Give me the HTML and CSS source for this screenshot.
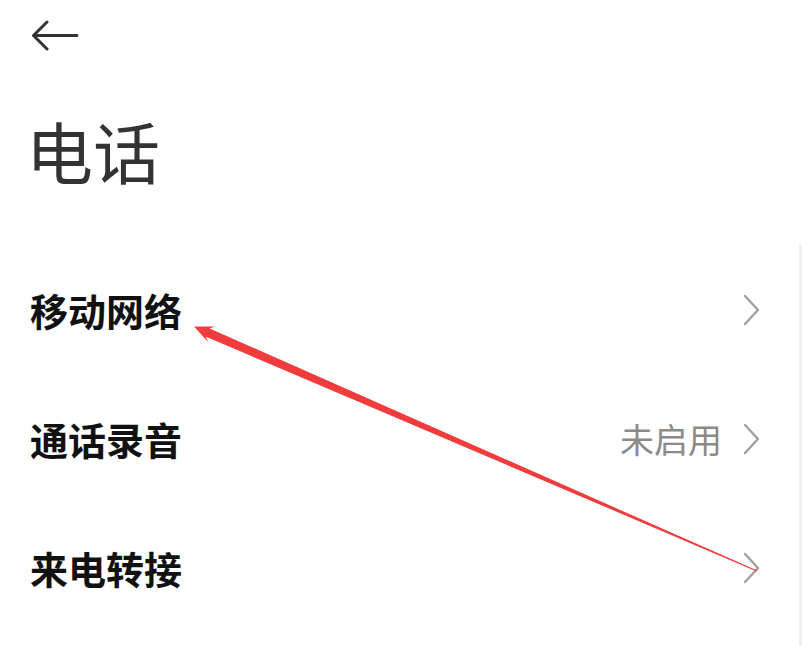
FILE: index.html
```html
<!DOCTYPE html>
<html lang="zh-CN">
<head>
<meta charset="utf-8">
<title>电话</title>
<link rel="stylesheet" href="styles.css">
</head>
<body>
<div class="page">
  <header class="topbar">
    <svg class="back" width="48" height="34" viewBox="0 0 48 34">
      <path d="M15 2 L1.5 15.5 L15 29 M1.5 15.5 H45" fill="none" stroke="#333" stroke-width="3" stroke-linecap="round" stroke-linejoin="round"/>
    </svg>
  </header>
  <h1 class="title">电话</h1>
  <ul class="list">
    <li class="row">
      <span class="label">移动网络</span>
      <span class="right">
        <svg class="chev" width="20" height="34" viewBox="0 0 20 34"><path d="M3 3 L16 17 L3 31" fill="none" stroke="#a0a0a0" stroke-width="2.4" stroke-linecap="round" stroke-linejoin="round"/></svg>
      </span>
    </li>
    <li class="row">
      <span class="label">通话录音</span>
      <span class="right">
        <span class="value">未启用</span>
        <svg class="chev" width="20" height="34" viewBox="0 0 20 34"><path d="M3 3 L16 17 L3 31" fill="none" stroke="#a0a0a0" stroke-width="2.4" stroke-linecap="round" stroke-linejoin="round"/></svg>
      </span>
    </li>
    <li class="row">
      <span class="label">来电转接</span>
      <span class="right">
        <svg class="chev" width="20" height="34" viewBox="0 0 20 34"><path d="M3 3 L16 17 L3 31" fill="none" stroke="#a0a0a0" stroke-width="2.4" stroke-linecap="round" stroke-linejoin="round"/></svg>
      </span>
    </li>
  </ul>
  <div class="edge"></div>
  <svg class="annotation" width="802" height="646" viewBox="0 0 802 646">
    <polygon points="194,326.5 214.9,326.4 209.6,328.5 757.2,570.5 756.8,571.5 206,336.7 208.1,342" fill="#f03c3c"/>
  </svg>
</div>
</body>
</html>
```
FILE: styles.css
```css
html, body {
  margin: 0;
  padding: 0;
  background: #ffffff;
}
body {
  font-family: "Noto Sans CJK SC", "Noto Sans", sans-serif;
  color: #111;
}
.page {
  position: relative;
  width: 802px;
  height: 646px;
  overflow: hidden;
}
.topbar {
  height: 100px;
  padding: 20px 0 0 32px;
  box-sizing: border-box;
}
.back {
  display: block;
}
.title {
  margin: 0;
  padding-left: 26px;
  font-size: 67px;
  font-weight: 400;
  line-height: 100px;
  height: 145px;
  color: #333;
}
.list {
  list-style: none;
  margin: 0;
  padding: 0;
}
.row {
  height: 129px;
  display: flex;
  align-items: center;
  justify-content: space-between;
  padding: 0 40px 0 30px;
}
.label {
  font-size: 38px;
  font-weight: 700;
  color: #111;
}
.right {
  display: flex;
  align-items: center;
  gap: 20px;
}
.value {
  font-size: 34px;
  color: #8a8a8a;
}
.chev {
  display: block;
}
.edge {
  position: absolute;
  right: 0;
  top: 245px;
  bottom: 0;
  width: 3px;
  background: #efefef;
}
.annotation {
  position: absolute;
  left: 0;
  top: 0;
  pointer-events: none;
}
```
